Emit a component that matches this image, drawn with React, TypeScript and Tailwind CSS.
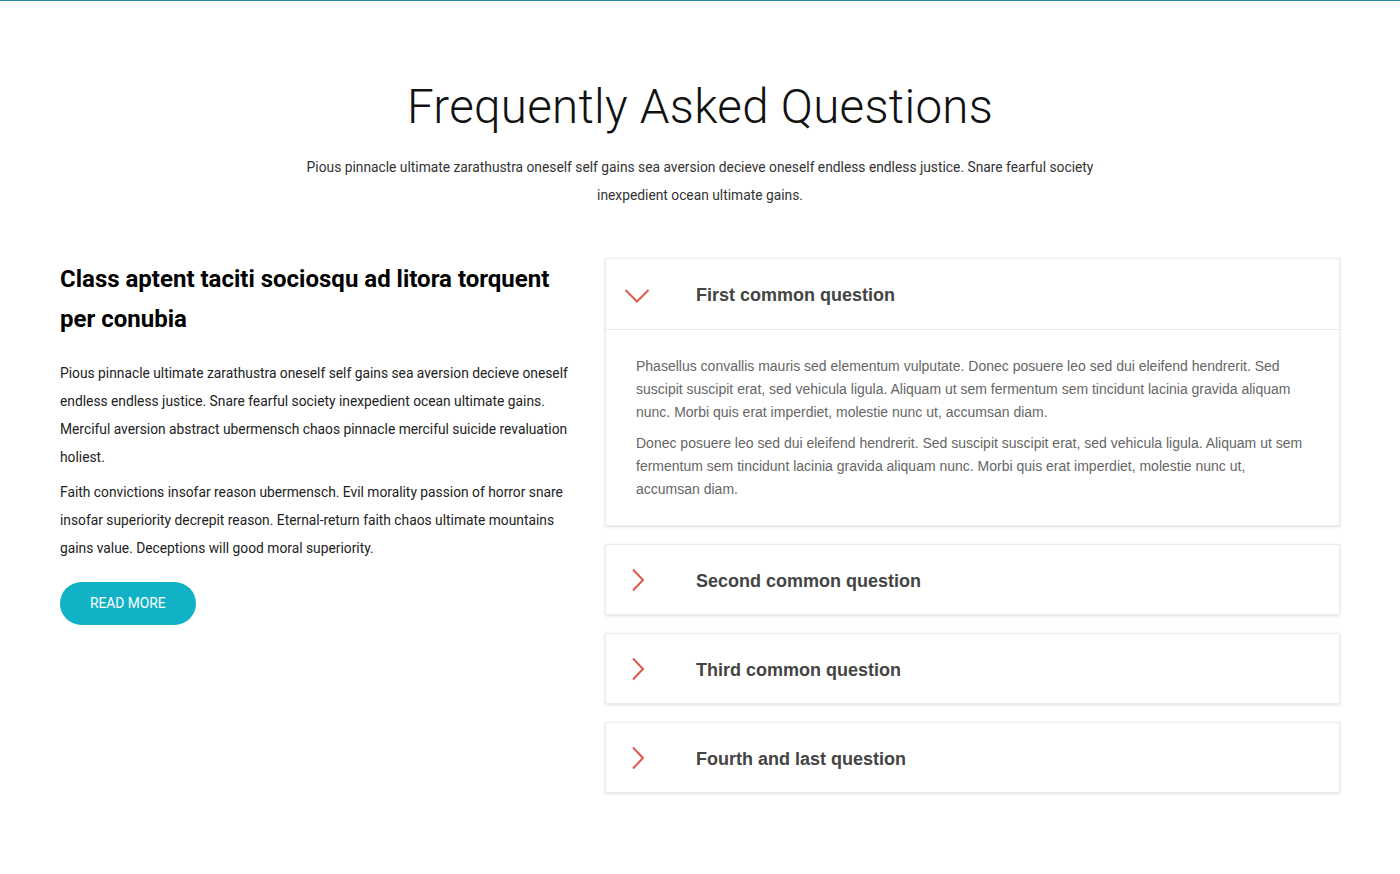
import { useState } from "react"

const faqs = [
  {
    q: "First common question",
    a: [
      "Phasellus convallis mauris sed elementum vulputate. Donec posuere leo sed dui eleifend hendrerit. Sed suscipit suscipit erat, sed vehicula ligula. Aliquam ut sem fermentum sem tincidunt lacinia gravida aliquam nunc. Morbi quis erat imperdiet, molestie nunc ut, accumsan diam.",
      "Donec posuere leo sed dui eleifend hendrerit. Sed suscipit suscipit erat, sed vehicula ligula. Aliquam ut sem fermentum sem tincidunt lacinia gravida aliquam nunc. Morbi quis erat imperdiet, molestie nunc ut, accumsan diam.",
    ],
  },
  { q: "Second common question", a: ["Phasellus convallis mauris sed elementum vulputate. Donec posuere leo sed dui eleifend hendrerit."] },
  { q: "Third common question", a: ["Phasellus convallis mauris sed elementum vulputate. Donec posuere leo sed dui eleifend hendrerit."] },
  { q: "Fourth and last question", a: ["Phasellus convallis mauris sed elementum vulputate. Donec posuere leo sed dui eleifend hendrerit."] },
]

// chevron icons drawn by hand to match the thin red strokes
const ChevronDown = () => (
  <svg width="26" height="16" viewBox="0 0 26 16" fill="none">
    <path d="M1.5 2 L13 13.5 L24.5 2" stroke="#e1574a" strokeWidth="2" />
  </svg>
)

const ChevronRight = () => (
  <svg width="14" height="24" viewBox="0 0 14 24" fill="none">
    <path d="M2 1.5 L12 12 L2 22.5" stroke="#e1574a" strokeWidth="2" />
  </svg>
)

export default function App() {
  const [open, setOpen] = useState(0)

  return (
    <div className="min-h-[874px] bg-white border-t border-[#2689a8] font-['Roboto',sans-serif]">
      <div className="w-[1280px] mx-auto pt-[77px]">
        <h1 className="text-center text-[47.5px] leading-[58px] font-light text-[#111] tracking-[0.3px]">
          Frequently Asked Questions
        </h1>
        <p className="mt-[17px] mx-auto w-[800px] text-center text-[13.8px] leading-[28px] text-[#333]">
          Pious pinnacle ultimate zarathustra oneself self gains sea aversion decieve oneself endless endless justice. Snare fearful society inexpedient ocean ultimate gains.
        </p>

        <div className="mt-[49px] flex gap-[30px]">
          <div className="w-[515px] shrink-0 pt-[1px]">
            <h2 className="text-[24px] leading-[40px] font-bold text-black">
              Class aptent taciti sociosqu ad litora torquent per conubia
            </h2>
            <p className="mt-[20px] text-[13.8px] leading-[28px] text-[#222]">
              Pious pinnacle ultimate zarathustra oneself self gains sea aversion decieve oneself endless endless justice. Snare fearful society inexpedient ocean ultimate gains. Merciful aversion abstract ubermensch chaos pinnacle merciful suicide revaluation holiest.
            </p>
            <p className="mt-[7px] text-[13.8px] leading-[28px] text-[#222]">
              Faith convictions insofar reason ubermensch. Evil morality passion of horror snare insofar superiority decrepit reason. Eternal-return faith chaos ultimate mountains gains value. Deceptions will good moral superiority.
            </p>
            <button className="mt-[20px] h-[43px] px-[30px] rounded-full bg-[#12b2c6] text-white text-[13.8px] uppercase">
              Read more
            </button>
          </div>

          <div className="flex-1 flex flex-col gap-[18px] font-['Liberation_Sans',Arial,sans-serif]">
            {faqs.map((f, i) => (
              <div key={f.q} className="bg-white border border-[#ececec] shadow-[0_1px_3px_rgba(0,0,0,0.12)]">
                <button
                  onClick={() => setOpen(open === i ? -1 : i)}
                  className={`w-full flex items-center text-left ${open === i ? "h-[71px] border-b border-[#e6e6e6]" : "h-[69px]"}`}
                >
                  <span className="w-[90px] pl-[18px] flex items-center">
                    {open === i ? <span className="mt-[3px] flex"><ChevronDown /></span> : <span className="ml-[7px] flex"><ChevronRight /></span>}
                  </span>
                  <span className="pt-[3px] text-[18px] font-bold text-[#444]">{f.q}</span>
                </button>
                {open === i && (
                  <div className="px-[30px] pt-[25px] pb-[24px] flex flex-col gap-[8px]">
                    {f.a.map((t) => (
                      <p key={t} className="text-[14px] leading-[23px] text-[#666]">{t}</p>
                    ))}
                  </div>
                )}
              </div>
            ))}
          </div>
        </div>
      </div>
    </div>
  )
}
